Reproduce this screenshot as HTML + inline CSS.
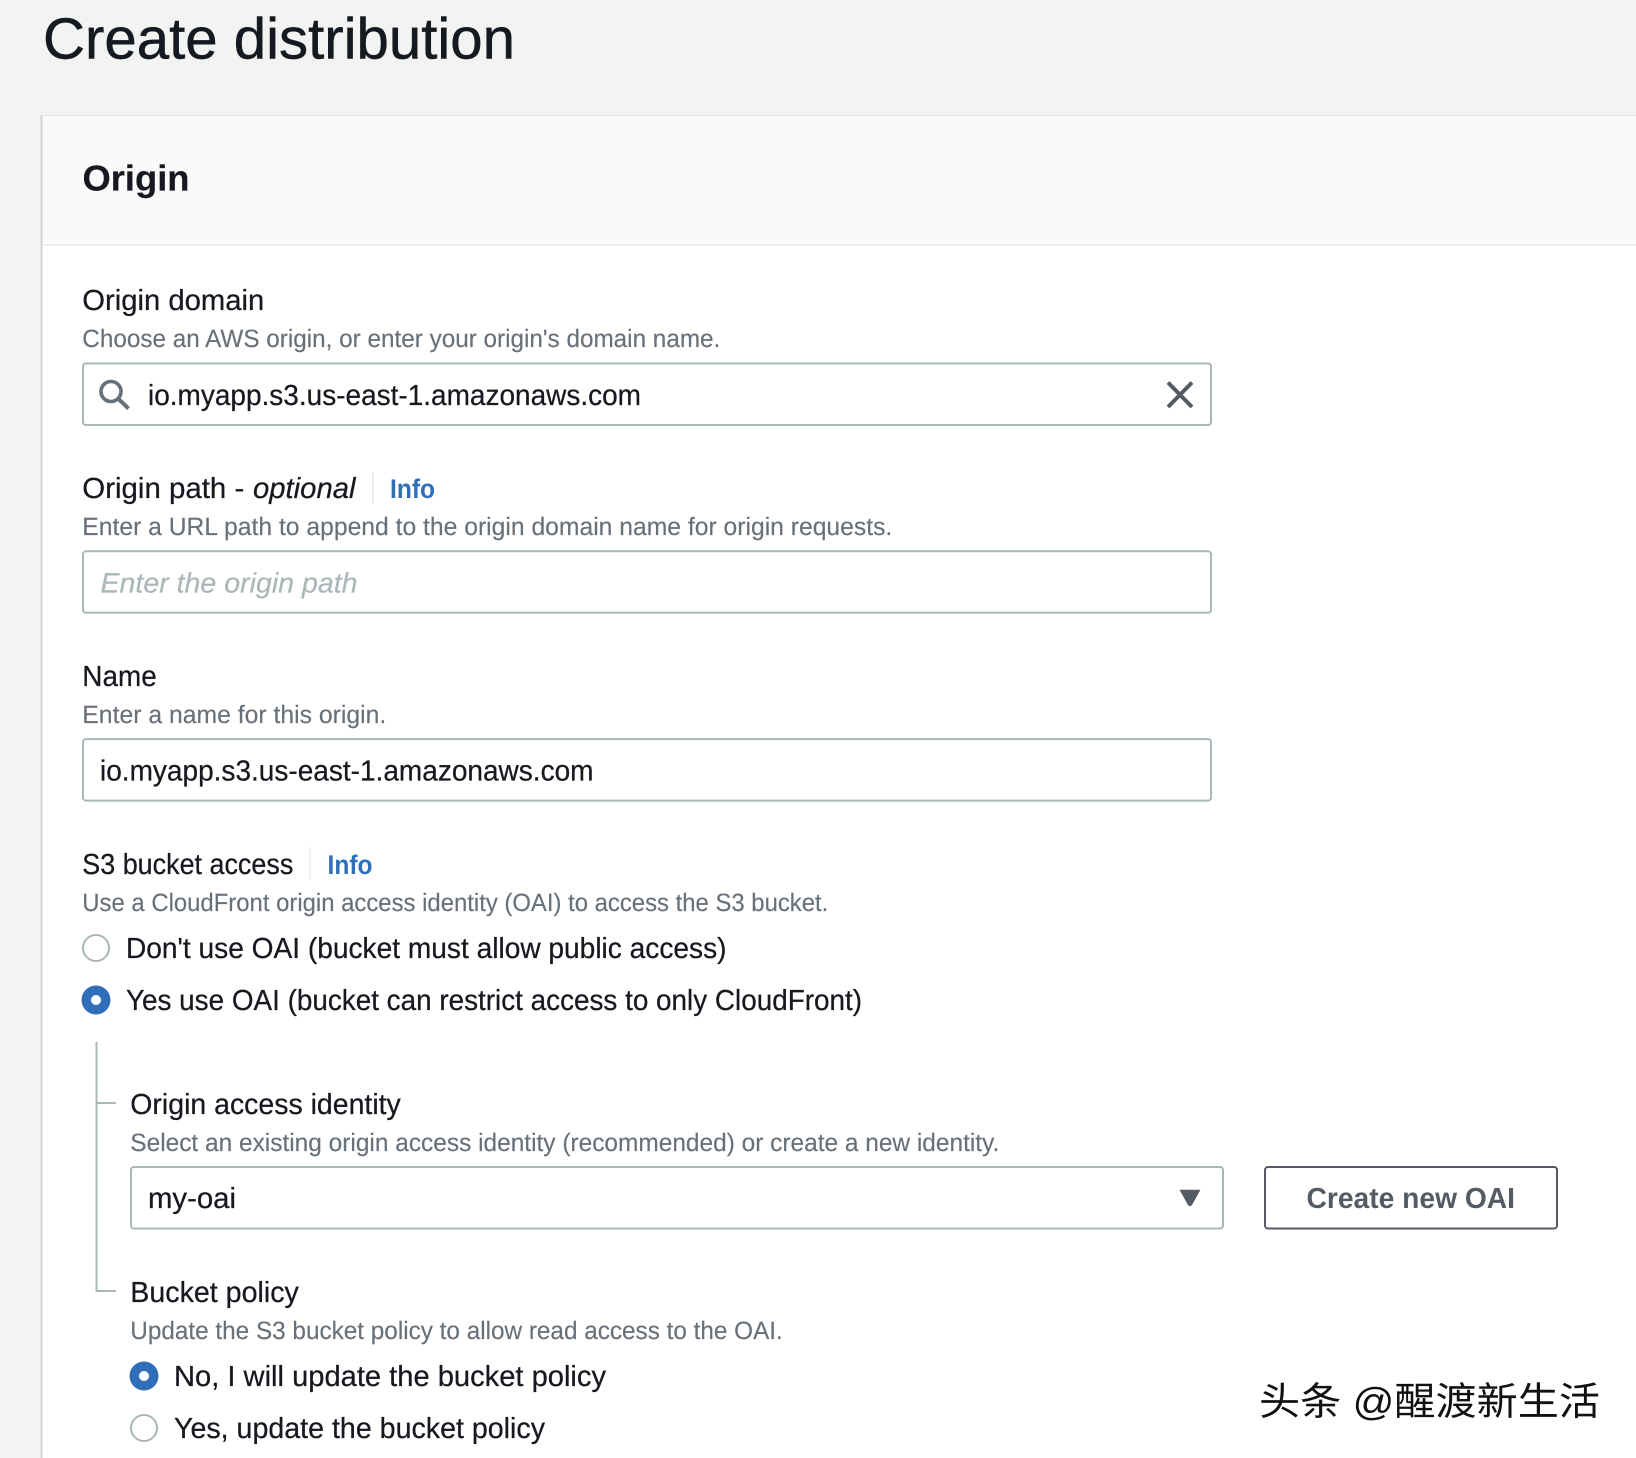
<!DOCTYPE html>
<html lang="en">
<head>
<meta charset="utf-8">
<title>Create distribution</title>
<style>
html,body{margin:0;padding:0;background:#f2f3f3;width:1636px;height:1458px;overflow:hidden}
svg{display:block;font-family:"Liberation Sans","Noto Sans CJK SC",sans-serif;text-rendering:geometricPrecision}
.l{font-size:29px;fill:#16191f;stroke:#16191f;stroke-width:.25}
.d{font-size:25px;fill:#687078;stroke:#687078;stroke-width:.15}
.v{font-size:29px;fill:#16191f;stroke:#16191f;stroke-width:.25}
.i{font-size:27px;font-weight:bold;fill:#2e6fb7}
.b{fill:#fff;stroke:#aab7b8;stroke-width:2}
.r{fill:#fff;stroke:#aab7b8;stroke-width:2}
</style>
</head>
<body>
<svg xmlns="http://www.w3.org/2000/svg" width="1636" height="1458" viewBox="0 0 1636 1458">
<rect width="1636" height="1458" fill="#f2f3f3"/>
<text x="43" y="58.5" font-size="58" fill="#16191f" stroke="#16191f" stroke-width=".5" textLength="472" lengthAdjust="spacingAndGlyphs">Create distribution</text>

<rect x="41" y="115" width="1595" height="1343" fill="#fff"/>
<rect x="41" y="115" width="1595" height="130" fill="#fafafa"/>
<rect x="41" y="244" width="1595" height="2" fill="#eaeded"/>
<rect x="41" y="115" width="1595" height="1" fill="#e6e9e9"/>
<rect x="40.500" y="115" width="2" height="1343" fill="#d0d6d6"/>
<text x="82.500" y="190.500" font-size="36" font-weight="bold" fill="#16191f" stroke="#16191f" stroke-width=".2" textLength="107" lengthAdjust="spacingAndGlyphs">Origin</text>

<text class="l" x="82.300" y="310" textLength="182" lengthAdjust="spacingAndGlyphs">Origin domain</text>
<text class="d" x="82.300" y="347" textLength="638" lengthAdjust="spacingAndGlyphs">Choose an AWS origin, or enter your origin's domain name.</text>
<rect class="b" x="83" y="363.500" width="1128" height="61.500" rx="3"/>
<circle cx="111" cy="391.500" r="10" fill="none" stroke="#687078" stroke-width="3.600"/>
<path d="M118.500 399 L128.500 408.500" fill="none" stroke="#687078" stroke-width="4"/>
<text class="v" x="148" y="404.800" textLength="493" lengthAdjust="spacingAndGlyphs">io.myapp.s3.us-east-1.amazonaws.com</text>
<path d="M1168 382.500 L1192 407 M1192 382.500 L1168 407" fill="none" stroke="#545b64" stroke-width="4"/>

<text class="l" x="82.300" y="497.800" textLength="162" lengthAdjust="spacingAndGlyphs">Origin path -</text>
<text class="l" x="253" y="497.800" font-style="italic" textLength="102.500" lengthAdjust="spacingAndGlyphs">optional</text>
<rect x="372" y="472" width="1.500" height="32" fill="#eaeded"/>
<text class="i" x="390" y="498.200" textLength="45" lengthAdjust="spacingAndGlyphs">Info</text>
<text class="d" x="82.300" y="535" textLength="810" lengthAdjust="spacingAndGlyphs">Enter a URL path to append to the origin domain name for origin requests.</text>
<rect class="b" x="83" y="551.300" width="1128" height="61.500" rx="3"/>
<text x="100.500" y="592.500" font-size="28" font-style="italic" fill="#aab7b8" stroke="#aab7b8" stroke-width=".2" textLength="257" lengthAdjust="spacingAndGlyphs">Enter the origin path</text>

<text class="l" x="82.300" y="685.800" textLength="74.500" lengthAdjust="spacingAndGlyphs">Name</text>
<text class="d" x="82.300" y="722.900" textLength="304" lengthAdjust="spacingAndGlyphs">Enter a name for this origin.</text>
<rect class="b" x="83" y="739.100" width="1128" height="61.500" rx="3"/>
<text class="v" x="100" y="780.600" textLength="493.500" lengthAdjust="spacingAndGlyphs">io.myapp.s3.us-east-1.amazonaws.com</text>

<text class="l" x="82.300" y="874" textLength="211" lengthAdjust="spacingAndGlyphs">S3 bucket access</text>
<rect x="309.500" y="847.500" width="1.500" height="32" fill="#eaeded"/>
<text class="i" x="327.500" y="874" textLength="45" lengthAdjust="spacingAndGlyphs">Info</text>
<text class="d" x="82.300" y="910.900" textLength="746" lengthAdjust="spacingAndGlyphs">Use a CloudFront origin access identity (OAI) to access the S3 bucket.</text>

<circle class="r" cx="96" cy="948" r="13"/>
<text class="v" x="126" y="958" textLength="600.500" lengthAdjust="spacingAndGlyphs">Don't use OAI (bucket must allow public access)</text>
<circle cx="96" cy="1000" r="14.500" fill="#2e6fb7"/>
<circle cx="96" cy="1000" r="5" fill="#fff"/>
<text class="v" x="126" y="1010" textLength="736" lengthAdjust="spacingAndGlyphs">Yes use OAI (bucket can restrict access to only CloudFront)</text>

<path d="M96.500 1042 V1291 H116 M96.500 1103 H116" fill="none" stroke="#aab7b8" stroke-width="2"/>

<text class="l" x="130.300" y="1114" textLength="270.500" lengthAdjust="spacingAndGlyphs">Origin access identity</text>
<text class="d" x="130.300" y="1151" textLength="869" lengthAdjust="spacingAndGlyphs">Select an existing origin access identity (recommended) or create a new identity.</text>
<rect class="b" x="131" y="1167" width="1092" height="61.500" rx="3"/>
<text class="v" x="148" y="1208" textLength="88" lengthAdjust="spacingAndGlyphs">my-oai</text>
<path d="M1180 1190 H1200 L1192 1204.500 Q1190 1207.500 1188 1204.500 Z" fill="#545b64" stroke="#545b64" stroke-width=".6" stroke-linejoin="round"/>
<rect x="1265" y="1167" width="292" height="61.500" rx="3" fill="#fff" stroke="#545b64" stroke-width="2"/>
<text x="1306.500" y="1208" font-size="29" font-weight="bold" fill="#545b64" textLength="208.500" lengthAdjust="spacingAndGlyphs">Create new OAI</text>

<text class="l" x="130.300" y="1302" textLength="168.500" lengthAdjust="spacingAndGlyphs">Bucket policy</text>
<text class="d" x="130.300" y="1339" textLength="652.500" lengthAdjust="spacingAndGlyphs">Update the S3 bucket policy to allow read access to the OAI.</text>
<circle cx="144" cy="1376" r="14.500" fill="#2e6fb7"/>
<circle cx="144" cy="1376" r="5" fill="#fff"/>
<text class="v" x="174" y="1386" textLength="432" lengthAdjust="spacingAndGlyphs">No, I will update the bucket policy</text>
<circle class="r" cx="144" cy="1428" r="13"/>
<text class="v" x="174" y="1438" textLength="371" lengthAdjust="spacingAndGlyphs">Yes, update the bucket policy</text>

<text x="1259" y="1415" font-size="39" fill="#111" textLength="341" lengthAdjust="spacingAndGlyphs">头条 @醒渡新生活</text>
</svg>
</body>
</html>
